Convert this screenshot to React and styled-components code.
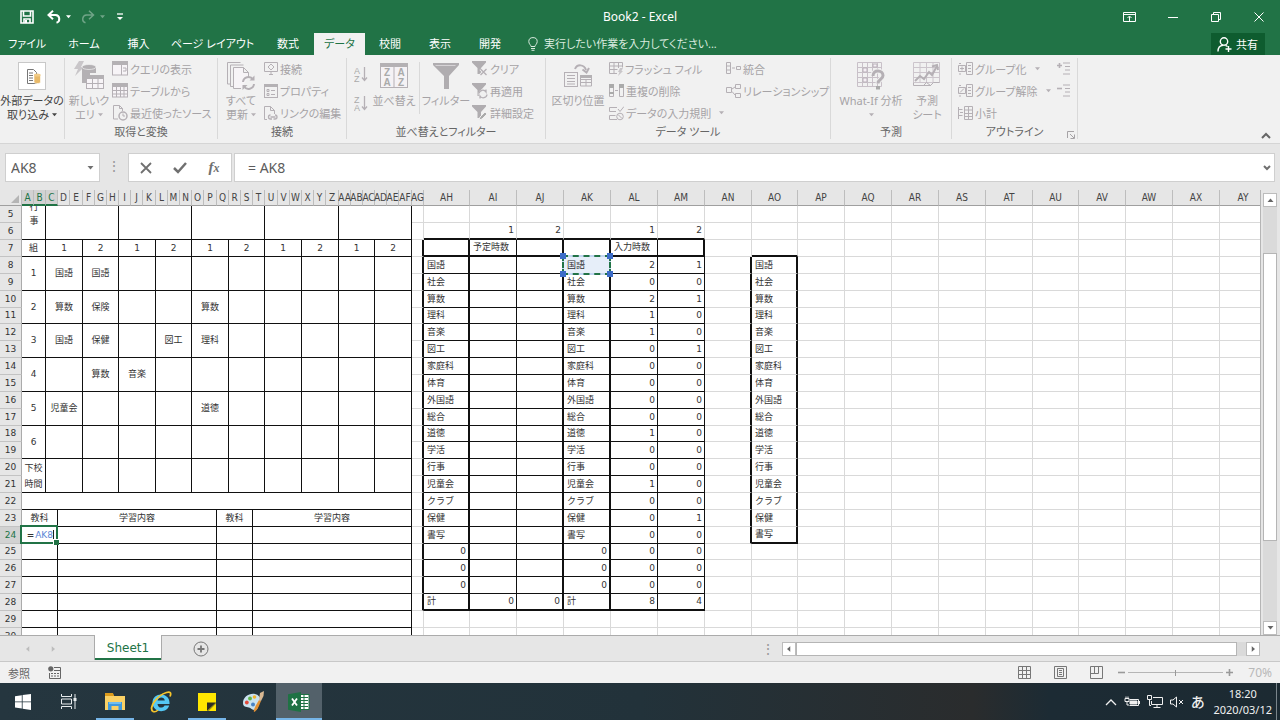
import React from 'react'
import styled, { createGlobalStyle, css } from 'styled-components'

const GlobalStyle = createGlobalStyle`
    * {
        box-sizing: border-box;
    }
    body {
        margin: 0;
        background: #e6e6e6;
        font-family: "Noto Sans", "Noto Sans CJK JP", sans-serif;
        font-feature-settings: "palt";
        font-size: 11px;
        color: #444;
    }
    button, input {
        font: inherit;
        font-feature-settings: inherit;
        color: inherit;
        border: 0;
        padding: 0;
        margin: 0;
        background: none;
        border-radius: 0;
    }
`;

/* ---------- sheet data ---------- */

const letters = 'ABCDEFGHIJKLMNOPQRSTUVWXYZ'.split('')
const columnNames = [...letters, ...letters.slice(0, 25).map((l) => 'A' + l)]
const columnWidths = [
    12, 12,
    12, 12, 13, 12, 12, 12, 12, 12, 13, 12, 12, 12, 12, 13, 12,
    12, 12, 12, 13, 12, 12, 12, 12, 13, 12, 12, 12, 12, 12, 13,
    12,
    46, 47, 47, 47, 47, 47, 47, 46, 47, 47, 47, 47, 47, 46, 47, 47, 47, 47,
]
const HEAD_WIDTH = 22
const sheetWidth = columnWidths.reduce((a, b) => a + b, HEAD_WIDTH)
const shortRows = [11, 18, 25]

const subjects = ['国語', '社会', '算数', '理科', '音楽', '図工', '家庭科', '体育', '外国語', '総合', '道徳', '学活', '行事', '児童会', 'クラブ', '保健', '書写']
const counts = [
    [2, 1], [0, 0], [2, 1], [1, 0], [1, 0], [0, 1], [0, 0], [0, 0], [0, 0], [0, 0],
    [1, 0], [0, 0], [0, 0], [1, 0], [0, 0], [0, 1], [0, 0], [0, 0], [0, 0], [0, 0],
]
const timetable = {
    8: ['1', '国語', '国語'],
    10: ['2', '算数', '保険', '', '', '算数'],
    12: ['3', '国語', '保健', '', '図工', '理科'],
    14: ['4', '', '算数', '音楽'],
    16: ['5', '児童会', '', '', '', '道徳'],
    18: ['6'],
    20: ['下校 時間'],
}

/* borders: r / b = 0 none, 1 thin black, 2 thick black, undefined = grid line */
function leftCells(row) {
    if (row === 5) {
        return [
            { text: 'event', span: 2, rows: 2, r: 1, b: 1 },
            ...Array.from({ length: 5 }, () => ({ span: 6, rows: 2, r: 1, b: 1 })),
        ]
    }
    if (row === 7) {
        return [
            { text: '組', span: 2, r: 1, b: 1, align: 'center' },
            ...Array.from({ length: 10 }, (_, i) => ({ text: i % 2 ? '2' : '1', span: 3, r: 1, b: 1, align: 'center' })),
        ]
    }
    if (timetable[row]) {
        const line = timetable[row]
        return [
            { text: line[0], span: 2, rows: 2, r: 1, b: 1, align: 'center' },
            ...Array.from({ length: 10 }, (_, i) => ({ text: line[i + 1], span: 3, rows: 2, r: 1, b: 1, align: 'center' })),
        ]
    }
    if (row === 22) return [{ span: 32, r: 1, b: 1 }]
    if (row > 22) {
        const head = row === 23
        return [
            { text: head ? '教科' : row === 24 ? 'edit' : '', span: 3, r: 1, b: 1, align: 'center' },
            { text: head ? '学習内容' : '', span: 13, r: 1, b: 1, align: 'center' },
            { text: head ? '教科' : '', span: 3, r: 1, b: 1, align: 'center' },
            { text: head ? '学習内容' : '', span: 13, r: 1, b: 1, align: 'center' },
        ]
    }
    return []
}

function rightCells(row) {
    const boxed = row >= 7 && row <= 28
    const listed = row >= 8 && row <= 24
    const values = Array(18).fill('')
    if (row === 6) {
        values[1] = 1
        values[2] = 2
        values[4] = 1
        values[5] = 2
    }
    if (row === 7) {
        values[1] = '予定時数'
        values[4] = '入力時数'
    }
    if (row >= 8 && row <= 27) {
        const name = subjects[row - 8] || 0
        values[0] = name
        values[3] = name
        values[4] = counts[row - 8][0]
        values[5] = counts[row - 8][1]
    }
    if (listed) values[7] = subjects[row - 8]
    if (row === 28) {
        values.splice(0, 6, '計', 0, 0, '計', 8, 4)
    }
    const sides = [2, 1, 2, 2, 1, row === 7 ? 2 : 1]
    const cells = values.map((text, i) => {
        const cell = { text, align: typeof text === 'number' ? 'right' : 'left' }
        if (i < 6 && boxed) {
            cell.r = sides[i]
            cell.b = row === 7 || row === 28 ? 2 : 1
        }
        if (i < 6 && row === 6) cell.b = 2
        if ((i === 6 || i === 7) && listed) cell.r = 2
        if (i === 7 && (row === 7 || row === 24)) cell.b = 2
        if (i === 3 && row === 8) cell.copied = true
        return cell
    })
    return [{ text: '', r: boxed ? 2 : undefined }, ...cells]
}

/* ---------- icons ---------- */

const Svg = ({ w = 16, h = w, box, children, ...rest }) => (
    <svg width={w} height={h} viewBox={box || `0 0 ${w} ${h}`} fill="none" stroke="currentColor" aria-hidden="true" {...rest}>
        {children}
    </svg>
)
const Arrow = ({ size = 6 }) => (
    <Svg w={size} h={4} box="0 0 6 4" stroke="none"><path d="M0 0h6L3 3.5z" fill="currentColor" /></Svg>
)
const SaveIcon = () => (
    <Svg w={14}><path d="M1 1h12v12H1zM3.500 1v5h7V1M4 13V9h6v4" strokeWidth="1.600" /><path d="M5 10h2v3H5z" fill="currentColor" stroke="none" /></Svg>
)
const UndoIcon = () => (
    <Svg w={14}><path d="M1.500 5h7a4 4 0 0 1 1 7.800" strokeWidth="2" /><path d="M6 .8L1.500 5 6 9.200" strokeWidth="2" /></Svg>
)
const RedoIcon = () => (
    <Svg w={14}><path d="M12.500 5h-7a4 4 0 0 0-1 7.800M8 .8L12.500 5 8 9.200" strokeWidth="1.500" /></Svg>
)
const CustomizeIcon = () => (
    <Svg w={6} h={8}><path d="M0 1h6" strokeWidth="1.300" /><path d="M0 4h6L3 7z" fill="currentColor" stroke="none" /></Svg>
)
const RibbonOptionsIcon = () => (
    <Svg w={13} h={10}><path d="M.5.500h12v9H.5zM.5 2.500h12M6.500 9V4.500M4.500 6l2-2 2 2" /></Svg>
)
const MinimizeIcon = () => <Svg w={10}><path d="M0 5.500h10" /></Svg>
const RestoreIcon = () => <Svg w={10}><path d="M.5 2.500h7v7h-7zM2.500 2.500v-2h7v7h-2" /></Svg>
const CloseIcon = () => <Svg w={10}><path d="M.5.500l9 9M9.500.500l-9 9" /></Svg>
const BulbIcon = () => (
    <Svg w={10} h={14}><path d="M3 9.500C3 8 .8 7 .8 4.600a4.200 4 0 0 1 8.400 0C9.200 7 7 8 7 9.500zM3 11.500h4M3.500 13.300h3" /></Svg>
)
const ShareIcon = () => (
    <Svg w={15} h={15}><circle cx="7" cy="4.500" r="3.700" strokeWidth="1.400" /><path d="M1 14.500c0-3.500 2-6 5-6.300M8.500 8.300l2 1.200M11.500 9v6M8.500 12h6" strokeWidth="1.400" /></Svg>
)

const DataFileIcon = () => (
    <Svg w={28}>
        <rect x=".5" y=".5" width="27" height="27" fill="#fff" stroke="#c8c8c8" />
        <path d="M9.500 7.500h6l3 3v11h-9z" fill="#fff" stroke="#777" />
        <path d="M11 11h4M11 13.500h4M11 16h4M11 18.500h4" stroke="#777" />
        <path d="M16 13v7c0 2 6.500 2 6.500 0v-7z" fill="#e8b968" stroke="#fff" strokeWidth=".6" />
        <ellipse cx="19.300" cy="13" rx="3.300" ry="1.500" fill="#f1cb87" stroke="none" />
    </Svg>
)
const QueryIcon = () => (
    <Svg w={30}>
        <path d="M5 0h5L7 6h3L1 15l3-7H0z" fill="#c9c6c9" stroke="none" />
        <path d="M8 6v16h8V12h6V6z" fill="#b4b1b4" stroke="none" />
        <ellipse cx="15" cy="6" rx="7" ry="2.500" fill="#b4b1b4" stroke="#f0f0f0" strokeWidth=".7" />
        <rect x="12.500" y="14.500" width="17" height="13" fill="#f7f4f7" />
        <path d="M12 14h18v4H12z" fill="#b4b1b4" stroke="none" /><path d="M18.500 18v10M24 18v10M13 22.500h17" />
    </Svg>
)
const RefreshIcon = () => (
    <Svg w={28}>
        <path d="M3.500 22H.5V.500h13M6.500 24.500h-3V3h13" />
        <path d="M14 26.500H6.500v-21h10l5 5V15M16.500 5.500v5h5" fill="#f7f4f7" />
        <path d="M16 20a5.500 5.500 0 0 1 10-2.500M27 22a5.500 5.500 0 0 1-10 2.500" strokeWidth="2" />
        <path d="M27.500 13.500v5h-5zM15.500 28v-5h5z" fill="currentColor" stroke="none" />
    </Svg>
)
const SortDialogIcon = () => (
    <Svg w={28} h={26}>
        <rect x=".5" y=".5" width="27" height="24" fill="#f5f2f5" /><path d="M0 0h28v4H0z" fill="#b4b1b4" stroke="none" /><path d="M14 4v21" />
        <g fill="#aaa" stroke="none" fontSize="10" fontFamily="Liberation Sans" fontWeight="700" textAnchor="middle">
            <text x="7" y="13">Z</text><text x="7" y="23">A</text><text x="21" y="13">A</text><text x="21" y="23">Z</text>
        </g>
    </Svg>
)
const SortIcon = ({ first, second }) => (
    <Svg w={14} h={17}>
        <g fill="#aaa" stroke="none" fontSize="9" fontFamily="Liberation Sans"><text x="0" y="8">{first}</text><text x="0" y="16">{second}</text></g>
        <path d="M10.500 1v13M8 11.500l2.500 3 2.500-3" strokeWidth="1.300" />
    </Svg>
)
const FunnelIcon = () => <Svg w={26} h={26}><path d="M0 0h26v2L16 13v13h-5V13L0 2z" fill="#b0adb0" stroke="none" /><path d="M2.500 2.500h20" stroke="#d6d3d6" /></Svg>
const SmallFunnel = ({ children }) => <Svg><path d="M0 0h14v1.500L9 7v6H5.500V7L0 1.500z" fill="#b0adb0" stroke="none" />{children}</Svg>
const ClearIcon = () => <SmallFunnel><path d="M8.500 8l6 6M14.500 8l-6 6" stroke="#f0f0f0" strokeWidth="3" /><path d="M8.500 8l6 6M14.500 8l-6 6" strokeWidth="1.300" /></SmallFunnel>
const ReapplyIcon = () => <SmallFunnel><circle cx="11" cy="11" r="4.500" fill="#f0f0f0" stroke="none" /><path d="M7 10.500a3.800 3.800 0 0 1 7-1.500V6.500M15 11.500a3.800 3.800 0 0 1-7 1.500v2.500" strokeWidth="1.300" /></SmallFunnel>
const AdvancedIcon = () => <SmallFunnel><path d="M7 15l1-3 5-5 2 2-5 5z" fill="#aaa" stroke="#f0f0f0" /></SmallFunnel>
const TableIcon = () => <Svg><rect x=".5" y="1" width="15" height="13" fill="#f7f4f7" /><path d="M0 0h16v4H0z" fill="#b4b1b4" stroke="none" /><path d="M4.500 4v10M8.500 4v10M12 4v10M0 7.500h16M0 11h16" /></Svg>
const ShowQueryIcon = () => <Svg><rect x=".5" y="1" width="15" height="13" fill="#f7f4f7" /><path d="M0 0h16v4H0z" fill="#b4b1b4" stroke="none" /><path d="M9.500 4v10M11 7h3v3h-3" /></Svg>
const RecentIcon = () => <Svg><path d="M6 14H1.500V.500h6l3 3V6M7.500.500v3h3" /><circle cx="11" cy="11" r="4" strokeWidth="1.500" /><path d="M11 8.500V11h2" /></Svg>
const ConnectIcon = () => <Svg w={14}><path d="M.5.500h13v9H.5zM5 12.500h4M7 9.500v3" /><path d="M7 2l3 3-3 3-3-3z" /></Svg>
const PropertyIcon = () => <Svg w={14}><rect x=".5" y=".5" width="13" height="13" /><path d="M0 0h14v3H0z" fill="#b4b1b4" stroke="none" /><path d="M3 5.500h2v2H3zM3 9.500h2v2H3zM7 6.500h4M7 10.500h4" /></Svg>
const LinkIcon = () => <Svg w={14}><path d="M3 13.500H.5V.500h6l4 4V8M6.500.500v4h4" /><path d="M6.500 9a2 2 0 0 0 0 4H8M11 9a2 2 0 0 1 0 4H9.500M6.500 11h5" strokeWidth="1.300" /></Svg>
const SplitIcon = () => (
    <Svg w={28} h={24}>
        <path d="M11 5c2-5 9-5 11 1" strokeWidth="2" /><path d="M18.500 5.500l4 3 2.500-4.500" strokeWidth="2" />
        <rect x=".5" y="8.500" width="13" height="14" /><path d="M3 11.500h8M3 14.500h8M3 17.500h8M3 20h8" />
        <path d="M16.500 12h11v10h-11zM16 15.500h12M22 15v7M16 18.500h12" /><path d="M16 11h12v3H16z" fill="#b4b1b4" stroke="none" />
    </Svg>
)
const FlashIcon = () => <Svg w={14}><path d="M8 11.500H.5V.500h13v5M.5 4h13M.5 7.500h8M5 0v11M9.500 0v6" /><path d="M11 6h3l-1.500 3H14l-5 5 1.500-4H9z" fill="#c9c6c9" stroke="none" /></Svg>
const DuplicateIcon = () => <Svg w={15}><path d="M.5.500h4v12h-4zM10.500.500h4v12h-4zM6 6.500h3" /><path d="M0 0h5v4H0zM0 8h5v2H0zM10 0h5v4h-5z" fill="#aaa" stroke="none" /></Svg>
const ValidateIcon = () => <Svg w={15}><path d="M8 1.500H.5v4H7M6.500 9.500h-6v4H8M9 3l2 2.500L15 .5" /><circle cx="11" cy="10.500" r="3.300" /><path d="M9 8.500l4 4" /></Svg>
const MergeIcon = () => <Svg w={15}><path d="M.5.500h4v11h-4zM.5 4h4M.5 8h4M6 6h3M10.500 4.500h4v3h-4z" /></Svg>
const RelationIcon = () => <Svg w={15}><path d="M.5 3.500h5v5h-5zM9.500.500h5v4h-5zM9.500 9.500h5v4h-5zM6 5l3-2M6 7.500l3 3.500" /></Svg>
const WhatIfIcon = () => (
    <Svg w={28}>
        <path d="M.5.500h24v24H.5zM.5 5.500h24M.5 10.500h24M.5 15.500h24M.5 20.500h24M5.500.500v24M10.500.500v24M15.500.500v24M20.500.500v24" stroke="#c8c0c8" />
        <path d="M6 6h4v4H6zM6 16h4v4H6zM16 2h4v3h-4z" fill="#f5eef5" stroke="#b9b2b9" />
        <path d="M16 14c0-7 10-6 10-.5 0 4-5 3.500-5 8" stroke="#f0f0f0" strokeWidth="5" /><path d="M16 14c0-7 10-6 10-.5 0 4-5 3.500-5 8" strokeWidth="3" /><path d="M19 24h4v3.500h-4z" fill="#aaa" stroke="none" />
    </Svg>
)
const ForecastIcon = () => (
    <Svg w={28}>
        <path d="M.5.500h26v20H.5zM7 .5v20M13.500.500v20M20 .5v20M.5 5.500h26M.5 10.500h26M.5 15.500h26" stroke="#ccc5cc" />
        <path d="M2 19l5-5 4 3 5-7 3 3 5-9" strokeWidth="2" /><path d="M19 4.500l5-1.500 1 5" strokeWidth="2" /><path d="M.5 20.500v3h10l3-3 4 3 3-3h6M10 23.500h8" />
    </Svg>
)
const GroupIcon = () => <Svg w={15}><path d="M3 1.500H1M.5 3.500h7v6h-7zM2 6.500h4M4 4.500v4M3 12H1" /><path d="M8.500.500h6v12h-6zM10 3.500h3M10 6.500h3M10 9.500h3" /></Svg>
const UngroupIcon = () => <Svg w={15}><path d="M3 1.500H1M.5 3.500h7v6h-7zM2 8.500l4-4M3 12H1" /><path d="M8.500.500h6v12h-6zM10 3.500h3M10 6.500h3M10 9.500h3" /></Svg>
const SubtotalIcon = () => <Svg w={15}><path d="M.5 1v12M.5 3.500h4M.5 9.500h4M2 6.500h3M6.500.500h8v13h-8zM6.500 4h8M6.500 7.500h8M6.500 10.500h8M10.500.500v13" /></Svg>
const ShowDetailIcon = ({ minus }) => <Svg w={14}><path d={minus ? 'M0 4.500h5' : 'M0 3.500h5M2.500 1v5'} strokeWidth="1.600" /><path d="M6 1h7M8 4.500h5M8 8h5M6 12h7" /></Svg>
const LauncherIcon = () => <Svg w={8}><path d="M.5 7V.5H7M3 3l4 4M7.500 3.500v4h-4" /></Svg>
const ChevronUp = () => <Svg w={10} h={7}><path d="M1 6l4-4 4 4" strokeWidth="2" /></Svg>
const ChevronDown = () => <Svg w={8} h={6}><path d="M1 1l3 3 3-3" strokeWidth="2" /></Svg>
const CancelIcon = () => <Svg w={12}><path d="M1 1l10 10M11 1L1 11" strokeWidth="1.800" /></Svg>
const CheckIcon = () => <Svg w={14} h={12}><path d="M1 6l4 4 8-9" strokeWidth="2.500" /></Svg>

const GridViewIcon = () => <Svg w={13}><path d="M.5.500h12v12H.5zM4.500 0v13M8.500 0v13M0 4.500h13M0 8.500h13" /></Svg>
const PageViewIcon = () => <Svg w={13}><path d="M.5.500h12v12H.5zM3.500 2.500h6v8h-6zM5 4.500h3M5 6.500h3M5 8.500h3" /></Svg>
const BreakViewIcon = () => <Svg w={13}><path d="M.5.500h12v12H.5zM4.500 0v7M8.500 0v7.500H0" /></Svg>
const MacroIcon = () => <Svg w={13}><path d="M6 1.500h6.500v11h-11V7M6 4.500h6" /><path d="M3 7.500h2M6 7.500h2M9 7.500h2M3 10h2M6 10h2M9 10h2" /><circle cx="2.800" cy="2.800" r="2.600" fill="currentColor" stroke="none" /></Svg>

const WindowsIcon = () => <Svg w={16} stroke="none"><path d="M0 2.200l6.800-1v6.300H0zM7.600 1.100L16 0v7.500H7.600zM0 8.300h6.800v6.300l-6.800-1zM7.600 8.300H16V16l-8.400-1.200z" fill="#fff" /></Svg>
const TaskViewIcon = () => <Svg w={16} h={15} stroke="#e8ecee"><path d="M.5 0v2.500h10V0M.5 5h10v5H.500zM.5 15v-2.500h10V15M14 0v15" /><path d="M12.500 4h3v3h-3z" fill="#e8ecee" stroke="none" /></Svg>
const ExplorerIcon = () => (
    <Svg w={20} h={18} stroke="none">
        <path d="M0 1h8l1 2h11v14H0z" fill="#fad165" /><path d="M0 0h8l1 3H0z" fill="#dc9b1c" />
        <path d="M3 9h14v8h-3.500v-4h-7v4H3z" fill="#3f99dd" /><path d="M4 9h12v2H4z" fill="#6fbdf0" />
    </Svg>
)
const IeIcon = () => (
    <Svg w={22} stroke="none">
        <path d="M19.500 13H7.500c.3 4.500 5.800 4.500 7 1.500h4.700c-2.400 8.500-16.700 7.500-16.700-3C2.500.500 20.500.500 19.500 13zM7.600 9.600h7.200c-.3-4-6.600-4-7.200 0z" fill="#54c8f5" />
        <path d="M3 20.500c-5-3.500 4-16 13.500-19 4-1.200 5 .5 3.500 4" fill="none" stroke="#f7c52b" strokeWidth="1.800" /><path d="M3 20.500c1.500.7 4-.5 5-1.500" fill="none" stroke="#f7c52b" strokeWidth="1.500" />
    </Svg>
)
const NotesIcon = () => <Svg w={18} stroke="none"><path d="M0 0h18v10l-8 8H0z" fill="#ffe600" /><path d="M9 18V9.500h9z" fill="#2d2d24" /><path d="M10.500 18H18v-7.500z" fill="#ffe600" /></Svg>
const PaintIcon = () => (
    <Svg w={22} stroke="none">
        <path d="M1 12C1 6 7 2 13 3c5 1 7 6 4 9-1.500 1.500 0 4-2 6-3 3-6-1-8-1.500C4 15.500 1 16 1 12z" fill="#c9e2f0" />
        <circle cx="4.800" cy="11.500" r="1.900" fill="#e24a3b" /><circle cx="8" cy="7.500" r="1.900" fill="#60b548" /><circle cx="12.500" cy="6" r="1.800" fill="#f3b32b" /><circle cx="11" cy="13.500" r="2" fill="#4a83c4" />
        <path d="M12 21c-1-2 2-7 5-12l2 1c-2 5-4 10-7 11z" fill="#e39134" /><path d="M17 9l1-7 4-2-.5 5L19 10z" fill="#d8b892" />
    </Svg>
)
const ExcelIcon = () => (
    <Svg w={22} h={20} stroke="none">
        <path d="M11 2.500h10v15H11z" fill="#fff" stroke="#1f7244" /><path d="M12 5.500h8M12 8.500h8M12 11.500h8M12 14.500h8M16 3v14" stroke="#1f7244" />
        <path d="M0 2.200L13 0v20L0 17.800z" fill="#1f7244" /><path d="M4 6.500l5 7M9 6.500l-5 7" stroke="#fff" strokeWidth="1.800" />
    </Svg>
)
const TrayUpIcon = () => <Svg w={12} h={8}><path d="M1 7l5-5 5 5" strokeWidth="1.300" /></Svg>
const BatteryIcon = () => <Svg w={16} h={12}><path d="M5.500 3.500h9v6h-9M15.500 5v3M1 2.500h4v3H1zM2 .5v2M4 .5v2M3 6v3h2" /><path d="M6 5h7v3H6z" fill="currentColor" /></Svg>
const NetworkIcon = () => <Svg w={16} h={13}><path d="M6 2.500h9.500v7h-11V6M10 9.500v3M6.500 12.500h7M.5.500h4v4h-4zM2.500 4.500v6H4" /></Svg>
const MuteIcon = () => <Svg w={14} h={12}><path d="M.5 4v4h2.500l3.500 3V1L3 4zM9 4l4 4M13 4L9 8" /></Svg>

/* ---------- title and tabs ---------- */

const Window = styled.div`
    display: flex;
    flex-direction: column;
    height: 100vh;
    overflow: hidden;
`;
const TitleBar = styled.header`
    display: grid;
    grid-template-columns: 1fr auto 1fr;
    align-items: center;
    height: 33px;
    flex: none;
    background: #217346;
    color: #fff;
`;
const QuickAccess = styled.div`
    display: flex;
    align-items: center;
    gap: 4px;
    padding-left: 20px;
    height: 28px;
`;
const QuickButton = styled.button`
    display: flex;
    align-items: center;
    justify-content: center;
    width: ${(p) => p.$w || 14}px;
    height: 16px;
    margin-right: ${(p) => p.$after || 0}px;
    opacity: ${(p) => (p.$dim ? 0.35 : 1)};
`;
const Title = styled.h1`
    margin: 0;
    font-size: 12px;
    font-weight: 400;
`;
const WindowButtons = styled.div`
    display: flex;
    justify-content: flex-end;
    height: 28px;
`;
const WindowButton = styled.button`
    display: flex;
    align-items: center;
    justify-content: center;
    width: 43px;
`;
const TabBar = styled.nav`
    display: flex;
    height: 22px;
    flex: none;
    background: #217346;
    color: #fff;
    font-size: 11px;
`;
const Tab = styled.button`
    width: ${(p) => p.$w}px;
    line-height: 22px;
    white-space: nowrap;
    ${(p) => p.$active && css`
        background: #f1f1f1;
        color: #217346;
    `}
`;
const TellMe = styled.button`
    display: flex;
    align-items: center;
    gap: 6px;
    margin-left: 13px;
    line-height: 22px;
    color: #d9eadf;
`;
const Share = styled.button`
    display: flex;
    align-items: center;
    gap: 4px;
    width: 54px;
    padding-left: 6px;
    margin: 0 15px 0 auto;
    background: #0e5c2f;
    white-space: nowrap;
`;

/* ---------- ribbon ---------- */

const Ribbon = styled.section`
    display: flex;
    flex: none;
    height: 89px;
    padding-top: 3px;
    background: #f1f1f1;
    border-bottom: 1px solid #d5d5d5;
`;
const Group = styled.div`
    display: flex;
    flex-direction: column;
    flex: none;
    width: ${(p) => p.$w}px;
    height: 81px;
    border-right: 1px solid #d9d9d9;
    position: relative;
`;
const GroupBody = styled.div`
    display: flex;
    height: 69px;
    padding-left: ${(p) => p.$pad || 0}px;
    color: ${(p) => (p.$enabled ? '#444' : '#a6a3a6')};
    svg {
        color: ${(p) => (p.$enabled ? '#444' : '#b5b0b5')};
    }
`;
const GroupLabel = styled.div`
    text-align: center;
    line-height: 15px;
    color: #666;
`;
const Launcher = styled.button`
    position: absolute;
    right: 2px;
    bottom: 0;
    height: 8px;
    display: flex;
    color: #a6a3a6;
`;
const BigButton = styled.button`
    display: flex;
    flex-direction: column;
    align-items: center;
    flex: none;
    width: ${(p) => p.$w}px;
    line-height: 14px;
    white-space: nowrap;
    > span:first-child {
        display: flex;
        align-items: center;
        justify-content: center;
        height: 36px;
    }
`;
const LabelLine = styled.span`
    display: flex;
    align-items: center;
    gap: 3px;
    height: 14px;
`;
const SmallColumn = styled.div`
    display: flex;
    flex-direction: column;
    flex: none;
    width: ${(p) => (p.$w ? p.$w + 'px' : 'auto')};
    margin-left: ${(p) => p.$left || 0}px;
`;
const SmallButton = styled.button`
    display: flex;
    align-items: center;
    gap: 2px;
    height: 22px;
    white-space: nowrap;
    > svg:last-child:not(:first-child) {
        margin-left: 6px;
    }
`;
const SortColumn = styled.div`
    display: flex;
    flex-direction: column;
    gap: 12px;
    padding-top: 8px;
    width: 20px;
    button {
        display: flex;
    }
`;
const Divider = styled.div`
    width: 1px;
    height: 52px;
    margin: 4px 5px 0;
    background: #d9d9d9;
`;
const CollapseButton = styled.button`
    display: flex;
    align-self: flex-end;
    margin: 0 9px 4px auto;
    color: #666;
`;

/* ---------- formula bar ---------- */

const FormulaBar = styled.section`
    display: flex;
    flex: none;
    height: 46px;
    padding: 9px 5px 8px;
    background: #e6e6e6;
`;
const BarBox = styled.div`
    display: flex;
    align-items: center;
    background: #fff;
    border: 1px solid #cfcfcf;
    width: ${(p) => (p.$w ? p.$w + 'px' : 'auto')};
    flex: ${(p) => (p.$w ? 'none' : 1)};
    color: #707070;
    input {
        flex: 1;
        min-width: 0;
        font-size: 14px;
        color: #5c5c5c;
        padding-left: ${(p) => p.$pad}px;
        outline: none;
    }
    > button {
        display: flex;
        justify-content: center;
        min-width: ${(p) => p.$button || 14}px;
    }
`;
const Dots = styled.div`
    width: ${(p) => p.$w}px;
    text-align: center;
    color: #999;
    font-size: 14px;
    line-height: 26px;
`;
const Fx = styled.i`
    font: italic 700 15px "Liberation Serif", serif;
    line-height: 16px;
    small {
        font-size: 12px;
    }
`;

/* ---------- sheet ---------- */

const SheetArea = styled.main`
    display: flex;
    flex: 1;
    min-height: 0;
`;
const SheetView = styled.div`
    flex: 1;
    min-width: 0;
    overflow: hidden;
    background: #fff;
    border-right: 1px solid #b5b5b5;
`;
const Sheet = styled.table`
    table-layout: fixed;
    border-collapse: separate;
    border-spacing: 0;
    width: ${sheetWidth}px;
    font: 9px "DejaVu Sans", "Noto Sans CJK JP", sans-serif;
    font-feature-settings: normal;
    line-height: 9px;
    color: #333;
    th, td {
        padding: 0;
        font-weight: 400;
    }
`;
const ColumnHead = styled.th`
    height: 16px;
    font: 10px "DejaVu Sans Condensed", "DejaVu Sans", sans-serif;
    line-height: 13px;
    white-space: nowrap;
    color: ${(p) => (p.$on ? '#217346' : '#444')};
    background: ${(p) => (p.$on ? '#d2d2d2' : '#e6e6e6')};
    border-right: 1px solid #bdbdbd;
    border-bottom: ${(p) => (p.$on ? '2px solid #217346' : '1px solid #9f9f9f')};
    > span {
        display: flex;
        justify-content: center;
        height: 13px;
    }
`;
const Corner = styled(ColumnHead)`
    svg {
        display: block;
        margin: 3px 0 0 11px;
    }
`;
const RowHead = styled.th`
    color: ${(p) => (p.$on ? '#217346' : '#333')};
    background: ${(p) => (p.$on ? '#d2d2d2' : '#e6e6e6')};
    border-right: 1px solid #ababab;
    border-bottom: 1px solid #c3c3c3;
`;
const line = (v) => (v === undefined ? '1px solid #d9d9d9' : `${v}px solid #111`)
const Cell = styled.td`
    position: relative;
    border-right: ${(p) => line(p.$r)};
    border-bottom: ${(p) => line(p.$b)};
    text-align: ${(p) => p.$align || 'left'};
    vertical-align: ${(p) => (p.$top ? 'top' : 'middle')};
    white-space: ${(p) => (p.$wrap ? 'normal' : 'nowrap')};
    line-height: ${(p) => (p.$wrap ? 16 : 9)}px;
    && {
        padding: ${(p) => (p.$align === 'center' ? '0' : '0 2px 0 3px')};
    }
    ${(p) => p.$copied && css`
        background: #e6eef9;
    `}
`;
const ClippedLines = styled.div`
    display: flex;
    flex-direction: column;
    justify-content: flex-end;
    align-items: center;
    height: 22px;
    line-height: 14px;
    overflow: hidden;
    > span {
        flex: none;
    }
`;
const CopyFrame = styled.div`
    position: absolute;
    inset: -2px;
    border: 2px solid #c3d6f1;
    z-index: 1;
    &:before {
        content: "";
        position: absolute;
        inset: -2px;
        border: 2px dashed #217346;
    }
`;
const Knob = styled.i`
    position: absolute;
    width: 6px;
    height: 6px;
    background: #3c6cc8;
    ${(p) => p.$y}: -4px;
    ${(p) => p.$x}: -4px;
`;
const Editor = styled.div`
    position: absolute;
    inset: -2px -1px -1px -2px;
    padding-right: 2px;
    border: 2px solid #217346;
    line-height: 16px;
    text-align: right;
    z-index: 1;
    b {
        margin-right: 1px;
    }
    span {
        color: #5b86d6;
        border-right: 1px solid #222;
    }
    &:after {
        content: "";
        position: absolute;
        right: -3px;
        bottom: -3px;
        width: 5px;
        height: 5px;
        background: #217346;
        border: 1px solid #fff;
        border-width: 1px 0 0 1px;
    }
`;
const VerticalBar = styled.div`
    display: flex;
    flex-direction: column;
    width: 14px;
    margin: 3px 3px 0 2px;
    background: #dadada;
`;
const BarButton = styled.button`
    display: flex;
    align-items: center;
    justify-content: center;
    flex: none;
    width: 14px;
    height: 14px;
    background: #fff;
    border: 1px solid #bcbcbc;
    color: #666;
    svg {
        transform: rotate(${(p) => p.$turn || 0}deg);
    }
`;
const VerticalThumb = styled.div`
    flex: 288;
    background: #fff;
    border: 1px solid #b5b5b5;
`;
const Spacer = styled.div`
    flex: ${(p) => p.$grow || 1};
`;

/* ---------- sheet tabs and status ---------- */

const SheetTabs = styled.footer`
    display: flex;
    align-items: center;
    flex: none;
    height: 27px;
    padding: 0 20px 0 14px;
    background: #e6e6e6;
    border-top: 1px solid #ababab;
    border-bottom: 1px solid #c8c8c8;
`;
const TabArrow = styled.button`
    display: flex;
    justify-content: center;
    width: 26px;
    color: #bdbdbd;
    svg {
        transform: rotate(${(p) => p.$turn}deg);
    }
`;
const SheetTab = styled.button`
    align-self: flex-start;
    width: 68px;
    height: 25px;
    margin: -1px 31px 0 28px;
    background: #fff;
    border: 1px solid #ababab;
    border-width: 0 1px;
    box-shadow: inset 0 -2px #217346;
    color: #217346;
    font: 12px "DejaVu Sans", sans-serif;
`;
const AddSheet = styled.button`
    display: flex;
    color: #777;
`;
const HorizontalBar = styled.div`
    display: flex;
    width: 38.4%;
    background: #dadada;
`;
const HorizontalThumb = styled.div`
    flex: 1;
    height: 14px;
    margin-right: 9px;
    background: #fff;
    border: 1px solid #b5b5b5;
`;
const StatusBar = styled.footer`
    display: flex;
    align-items: center;
    flex: none;
    height: 21px;
    padding: 0 8px 0;
    background: #f1f1f1;
    color: #666;
    button {
        display: flex;
    }
`;
const StatusIcon = styled.button`
    margin-left: 18px;
`;
const Views = styled.div`
    display: flex;
    gap: 23px;
    margin-left: auto;
    margin-right: 15px;
    color: #777;
`;
const Zoom = styled.div`
    display: flex;
    align-items: center;
    gap: 3px;
    color: #999;
    input {
        appearance: none;
        width: 95px;
        height: 7px;
        background: linear-gradient(#b5b5b5, #b5b5b5) center / 100% 1px no-repeat;
    }
    input::-webkit-slider-thumb {
        appearance: none;
        width: 1px;
        height: 6px;
        background: #999;
    }
    output {
        width: 36px;
        text-align: right;
        font-size: 12px;
        line-height: 16px;
        color: #b8b8b8;
    }
`;

/* ---------- taskbar ---------- */

const Taskbar = styled.nav`
    display: flex;
    flex: none;
    height: 37px;
    background: linear-gradient(90deg, #25363f 0, #22323a 50%, #2a2c2d 76%, #1c2b34 82%, #1c2a32 100%);
    color: #f0f0f0;
`;
const TaskButton = styled.button`
    display: flex;
    align-items: center;
    justify-content: center;
    width: 46px;
    background: ${(p) => (p.$active ? '#53616a' : 'none')};
    position: relative;
    &:after {
        content: "";
        display: ${(p) => (p.$open ? 'block' : 'none')};
        position: absolute;
        left: ${(p) => (p.$active ? 0 : 4)}px;
        right: ${(p) => (p.$active ? 0 : 4)}px;
        bottom: 0;
        height: 2px;
        background: #76b5e8;
    }
`;
const Tray = styled.div`
    display: flex;
    align-items: center;
    gap: 7px;
    margin-left: auto;
    button {
        display: flex;
    }
`;
const Ime = styled.button`
    font-size: 14px;
    line-height: 20px;
    font-weight: 500;
`;
const Clock = styled.time`
    display: flex;
    flex-direction: column;
    align-items: center;
    line-height: 16px;
    padding-left: 2px;
    white-space: nowrap;
`;
const ShowDesktop = styled.button`
    width: 4px;
    height: 37px;
    && {
        margin-left: -3px;
        border-left: 1px solid #7a858b;
    }
`;

function Big({ icon, lines, width, arrow }) {
    return (
        <BigButton $w={width}>
            <span>{icon}</span>
            {lines.map((text, i) => (
                <LabelLine key={i}>
                    {text}
                    {arrow && i === lines.length - 1 && <Arrow size={5} />}
                </LabelLine>
            ))}
        </BigButton>
    )
}

function Small({ icon, text, arrow }) {
    return (
        <SmallButton>
            {icon}
            <span>{text}</span>
            {arrow && <Arrow size={5} />}
        </SmallButton>
    )
}

const tabs = [['ファイル', 54], ['ホーム', 60], ['挿入', 49], ['ページ レイアウト', 99], ['数式', 52], ['データ', 51], ['校閲', 50], ['表示', 50], ['開発', 50]]

function RibbonArea() {
    return (
        <Ribbon>
            <Group $w={65}>
                <GroupBody $enabled>
                    <Big width={64} icon={<DataFileIcon />} lines={['外部データの', '取り込み']} arrow />
                </GroupBody>
            </Group>
            <Group $w={153}>
                <GroupBody $pad={2}>
                    <Big width={44} icon={<QueryIcon />} lines={['新しいク', 'エリ']} arrow />
                    <SmallColumn $left={1}>
                        <Small icon={<ShowQueryIcon />} text="クエリの表示" />
                        <Small icon={<TableIcon />} text="テーブルから" />
                        <Small icon={<RecentIcon />} text="最近使ったソース" />
                    </SmallColumn>
                </GroupBody>
                <GroupLabel>取得と変換</GroupLabel>
            </Group>
            <Group $w={129}>
                <GroupBody $pad={2}>
                    <Big width={42} icon={<RefreshIcon />} lines={['すべて', '更新']} arrow />
                    <SmallColumn $left={2}>
                        <Small icon={<ConnectIcon />} text="接続" />
                        <Small icon={<PropertyIcon />} text="プロパティ" />
                        <Small icon={<LinkIcon />} text="リンクの編集" />
                    </SmallColumn>
                </GroupBody>
                <GroupLabel>接続</GroupLabel>
            </Group>
            <Group $w={199}>
                <GroupBody $pad={7}>
                    <SortColumn>
                        <button aria-label="昇順"><SortIcon first="A" second="Z" /></button>
                        <button aria-label="降順"><SortIcon first="Z" second="A" /></button>
                    </SortColumn>
                    <Big width={40} icon={<SortDialogIcon />} lines={['並べ替え']} />
                    <Divider />
                    <Big width={42} icon={<FunnelIcon />} lines={['フィルター']} />
                    <SmallColumn $left={5}>
                        <Small icon={<ClearIcon />} text="クリア" />
                        <Small icon={<ReapplyIcon />} text="再適用" />
                        <Small icon={<AdvancedIcon />} text="詳細設定" />
                    </SmallColumn>
                </GroupBody>
                <GroupLabel>並べ替えとフィルター</GroupLabel>
            </Group>
            <Group $w={285}>
                <GroupBody $pad={5}>
                    <Big width={54} icon={<SplitIcon />} lines={['区切り位置']} />
                    <SmallColumn $w={117} $left={4}>
                        <Small icon={<FlashIcon />} text="フラッシュ フィル" />
                        <Small icon={<DuplicateIcon />} text="重複の削除" />
                        <Small icon={<ValidateIcon />} text="データの入力規則" arrow />
                    </SmallColumn>
                    <SmallColumn>
                        <Small icon={<MergeIcon />} text="統合" />
                        <Small icon={<RelationIcon />} text="リレーションシップ" />
                    </SmallColumn>
                </GroupBody>
                <GroupLabel>データ ツール</GroupLabel>
            </Group>
            <Group $w={121}>
                <GroupBody $pad={4}>
                    <Big width={72} icon={<WhatIfIcon />} lines={['What-If 分析', '']} arrow />
                    <Big width={40} icon={<ForecastIcon />} lines={['予測', 'シート']} />
                </GroupBody>
                <GroupLabel>予測</GroupLabel>
            </Group>
            <Group $w={126}>
                <GroupBody $pad={6}>
                    <SmallColumn $w={99}>
                        <Small icon={<GroupIcon />} text="グループ化" arrow />
                        <Small icon={<UngroupIcon />} text="グループ解除" arrow />
                        <Small icon={<SubtotalIcon />} text="小計" />
                    </SmallColumn>
                    <SmallColumn>
                        <SmallButton aria-label="詳細データの表示"><ShowDetailIcon /></SmallButton>
                        <SmallButton aria-label="詳細データを表示しない"><ShowDetailIcon minus /></SmallButton>
                    </SmallColumn>
                </GroupBody>
                <GroupLabel>アウトライン</GroupLabel>
                <Launcher aria-label="アウトラインの設定"><LauncherIcon /></Launcher>
            </Group>
            <CollapseButton aria-label="リボンを折りたたむ"><ChevronUp /></CollapseButton>
        </Ribbon>
    )
}

function CellContent({ text }) {
    if (text === 'event') return <ClippedLines><span>行</span><span>事</span></ClippedLines>
    if (text === 'edit') return <Editor><b>=</b><span>AK8</span></Editor>
    return text
}

function SheetTable() {
    const rows = Array.from({ length: 26 }, (_, i) => i + 5)
    return (
        <Sheet>
            <colgroup>
                <col style={{ width: HEAD_WIDTH }} />
                {columnWidths.map((w, i) => <col key={i} style={{ width: w }} />)}
            </colgroup>
            <thead>
                <tr>
                    <Corner aria-label="すべて選択"><Svg w={8} stroke="none"><path d="M8 0v8H0z" fill="#b5b5b5" /></Svg></Corner>
                    {columnNames.map((name, i) => (
                        <ColumnHead key={name} $on={i < 3} scope="col"><span>{name}</span></ColumnHead>
                    ))}
                </tr>
            </thead>
            <tbody>
                {rows.map((row) => (
                    <tr key={row} style={{ height: shortRows.includes(row) ? 16 : 17 }}>
                        <RowHead $on={row === 24} scope="row">{row}</RowHead>
                        {[...leftCells(row), ...rightCells(row)].map((c, i) => (
                            <Cell
                                key={i}
                                colSpan={c.span}
                                rowSpan={c.rows}
                                $r={c.r}
                                $b={c.b}
                                $align={c.align}
                                $top={c.text === 'event'}
                                $wrap={c.text === '下校 時間'}
                                $copied={c.copied}
                            >
                                <CellContent text={c.text} />
                                {c.copied && (
                                    <CopyFrame>
                                        <Knob $x="left" $y="top" />
                                        <Knob $x="right" $y="top" />
                                        <Knob $x="left" $y="bottom" />
                                        <Knob $x="right" $y="bottom" />
                                    </CopyFrame>
                                )}
                            </Cell>
                        ))}
                    </tr>
                ))}
            </tbody>
        </Sheet>
    )
}

function App() {
    return (
        <Window>
            <GlobalStyle />
            <TitleBar>
                <QuickAccess>
                    <QuickButton aria-label="上書き保存" $after={9}><SaveIcon /></QuickButton>
                    <QuickButton aria-label="元に戻す"><UndoIcon /></QuickButton>
                    <QuickButton aria-label="元に戻す一覧" $w={6} $after={6}><Arrow size={5} /></QuickButton>
                    <QuickButton aria-label="やり直し" $dim><RedoIcon /></QuickButton>
                    <QuickButton aria-label="やり直し一覧" $w={6} $after={8} $dim><Arrow size={5} /></QuickButton>
                    <QuickButton aria-label="カスタマイズ" $w={6}><CustomizeIcon /></QuickButton>
                </QuickAccess>
                <Title>Book2 - Excel</Title>
                <WindowButtons>
                    <WindowButton aria-label="リボンの表示オプション"><RibbonOptionsIcon /></WindowButton>
                    <WindowButton aria-label="最小化"><MinimizeIcon /></WindowButton>
                    <WindowButton aria-label="元に戻す (縮小)"><RestoreIcon /></WindowButton>
                    <WindowButton aria-label="閉じる"><CloseIcon /></WindowButton>
                </WindowButtons>
            </TitleBar>
            <TabBar>
                {tabs.map(([name, w]) => (
                    <Tab key={name} $w={w} $active={name === 'データ'}>{name}</Tab>
                ))}
                <TellMe><BulbIcon />実行したい作業を入力してください...</TellMe>
                <Share><ShareIcon />共有</Share>
            </TabBar>
            <RibbonArea />
            <FormulaBar>
                <BarBox $w={95} $pad={5} $button={18}>
                    <input aria-label="名前ボックス" defaultValue="AK8" />
                    <button aria-label="名前一覧"><Arrow size={7} /></button>
                </BarBox>
                <Dots $w={28}>⋮</Dots>
                <BarBox $w={104} $button={34}>
                    <button aria-label="キャンセル"><CancelIcon /></button>
                    <button aria-label="入力"><CheckIcon /></button>
                    <button aria-label="関数の挿入"><Fx>f<small>x</small></Fx></button>
                </BarBox>
                <Dots $w={2} />
                <BarBox $pad={13}>
                    <input aria-label="数式バー" defaultValue="= AK8" />
                    <button aria-label="数式バーの展開"><ChevronDown /></button>
                </BarBox>
            </FormulaBar>
            <SheetArea>
                <SheetView>
                    <SheetTable />
                </SheetView>
                <VerticalBar>
                    <BarButton $turn={180} aria-label="上へ"><Arrow size={7} /></BarButton>
                    <Spacer $grow={46} />
                    <VerticalThumb />
                    <Spacer $grow={81} />
                    <BarButton aria-label="下へ"><Arrow size={7} /></BarButton>
                </VerticalBar>
            </SheetArea>
            <SheetTabs>
                <TabArrow $turn={90} aria-label="前のシート"><Arrow size={7} /></TabArrow>
                <TabArrow $turn={-90} aria-label="次のシート"><Arrow size={7} /></TabArrow>
                <SheetTab>Sheet1</SheetTab>
                <AddSheet aria-label="新しいシート"><Svg w={16}><circle cx="8" cy="8" r="7" /><path d="M8 4.500v7M4.500 8h7" strokeWidth="1.800" /></Svg></AddSheet>
                <Spacer />
                <Dots $w={28}>⋮</Dots>
                <HorizontalBar>
                    <BarButton $turn={90} aria-label="左へ"><Arrow size={7} /></BarButton>
                    <HorizontalThumb />
                    <BarButton $turn={-90} aria-label="右へ"><Arrow size={7} /></BarButton>
                </HorizontalBar>
            </SheetTabs>
            <StatusBar>
                <span>参照</span>
                <StatusIcon aria-label="マクロの記録"><MacroIcon /></StatusIcon>
                <Views>
                    <button aria-label="標準"><GridViewIcon /></button>
                    <button aria-label="ページ レイアウト表示"><PageViewIcon /></button>
                    <button aria-label="改ページ プレビュー"><BreakViewIcon /></button>
                </Views>
                <Zoom>
                    <button aria-label="縮小"><Svg w={7}><path d="M0 3.500h7" strokeWidth="1.600" /></Svg></button>
                    <input type="range" aria-label="ズーム" min="0" max="100" defaultValue="50" />
                    <button aria-label="拡大"><Svg w={7}><path d="M0 3.500h7M3.500 0v7" strokeWidth="1.600" /></Svg></button>
                    <output>70%</output>
                </Zoom>
            </StatusBar>
            <Taskbar>
                <TaskButton aria-label="スタート"><WindowsIcon /></TaskButton>
                <TaskButton aria-label="タスク ビュー"><TaskViewIcon /></TaskButton>
                <TaskButton aria-label="エクスプローラー" $open><ExplorerIcon /></TaskButton>
                <TaskButton aria-label="Internet Explorer"><IeIcon /></TaskButton>
                <TaskButton aria-label="付箋" $open><NotesIcon /></TaskButton>
                <TaskButton aria-label="ペイント"><PaintIcon /></TaskButton>
                <TaskButton aria-label="Excel" $open $active><ExcelIcon /></TaskButton>
                <Tray>
                    <button aria-label="隠れているインジケーター"><TrayUpIcon /></button>
                    <button aria-label="電源"><BatteryIcon /></button>
                    <button aria-label="ネットワーク"><NetworkIcon /></button>
                    <button aria-label="音量"><MuteIcon /></button>
                    <Ime>あ</Ime>
                    <Clock><span>18:20</span><span>2020/03/12</span></Clock>
                    <ShowDesktop aria-label="デスクトップの表示" />
                </Tray>
            </Taskbar>
        </Window>
    )
}

export default App
